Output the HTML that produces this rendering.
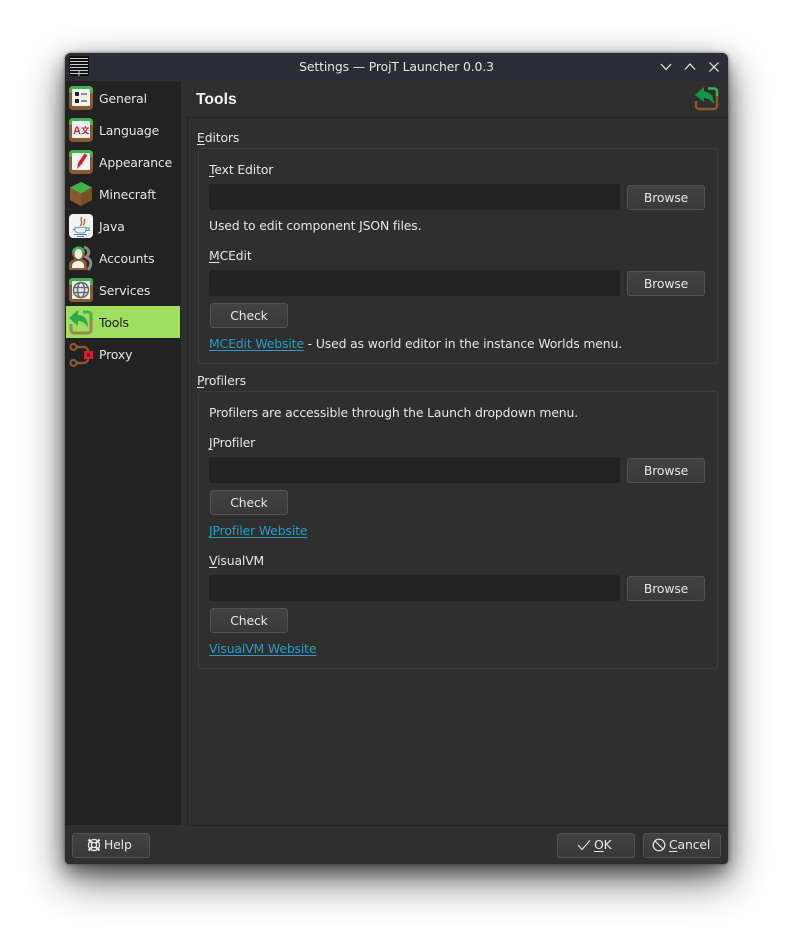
<!DOCTYPE html>
<html><head><meta charset="utf-8"><style>
html,body{margin:0;padding:0;width:793px;height:941px;background:#fff;overflow:hidden}
body{font-family:"DejaVu Sans","Liberation Sans",sans-serif;font-size:12.4px;color:#e6e6e6;position:relative;letter-spacing:-.13px}
#w{position:absolute;left:65px;top:53px;width:663px;height:811px;background:#2f2f2f;border-radius:6px 6px 4px 4px;box-shadow:0 16px 42px rgba(0,0,0,.58),0 8px 18px rgba(0,0,0,.42),0 0 3px rgba(0,0,0,.5);overflow:hidden}
#w>.a{margin-top:1px}
.a{position:absolute;white-space:nowrap;line-height:18px}
.b{position:absolute;box-sizing:border-box;width:78px;height:25px;background:linear-gradient(#424242,#393939);border:1px solid #525252;border-radius:3px;text-align:center;line-height:23px;color:#e6e6e6}
.i{position:absolute;box-sizing:border-box;left:144px;width:411px;height:26px;background:#232323;border-radius:3px}
.g{position:absolute;box-sizing:border-box;left:133px;width:520px;border:1px solid #3b3b3b;border-radius:3px}
u{text-underline-offset:2px}
.l{color:#2a9cc4;text-decoration:underline;text-underline-offset:2px}
svg{position:absolute;overflow:visible}
</style></head><body>
<div id="w">
<div style="position:absolute;left:0;top:0;width:663px;height:28px;background:#2a2e32"></div>
<svg style="left:4px;top:3px" width="21" height="21" viewBox="0 0 21 21"><rect width="20" height="20" fill="#111"/><path d="M1 2.500H19M1 5.500H19M1 8.500H19M1 11.500H19M1 14.500H19M1 17.500H19M10 14V20" stroke="#ccc" stroke-width="1"/></svg>
<div class="a" style="left:0;width:663px;text-align:center;top:4px;letter-spacing:-.13px">Settings — ProjT Launcher 0.0.3</div>
<svg style="left:595px;top:9px" width="60" height="12" fill="none" stroke="#eee" stroke-width="1.200"><path d="M1 2L6 7.500L11 2"/><path d="M25 7.500L30 2L35 7.500"/><path d="M49.500 .5L58.500 9.500M58.500 .5L49.500 9.500"/></svg>

<!-- sidebar -->
<div style="position:absolute;left:0;top:28px;width:116px;height:744px;background:#222"></div>
<div style="position:absolute;left:1px;top:253px;width:114px;height:32px;background:#9fdf60"></div>

<svg style="left:4px;top:33px" width="24" height="24"><rect width="24" height="24" rx="4" fill="#8a5a2b"/><path d="M0 4a4 4 0 0 1 4-4h16a4 4 0 0 1 4 4v3H0z" fill="#3cb44b"/><rect x="3" y="3" width="18" height="17" rx="1" fill="#f4f4f4"/><rect x="6" y="6" width="4" height="4" fill="#222"/><rect x="6" y="13" width="4" height="4" fill="#222"/><path d="M12 8h6M12 15h6" stroke="#666" stroke-width="1.500"/></svg>
<div class="a" style="left:34px;top:36px">General</div>

<svg style="left:4px;top:65px" width="24" height="24"><rect width="24" height="24" rx="4" fill="#8a5a2b"/><path d="M0 4a4 4 0 0 1 4-4h16a4 4 0 0 1 4 4v3H0z" fill="#3cb44b"/><rect x="3" y="3" width="18" height="17" rx="1" fill="#f4f4f4"/><text x="4" y="16" font-size="11" font-weight="bold" fill="#c8242c" font-family="Liberation Sans" letter-spacing="0">A</text><text x="12" y="15.500" font-size="8.500" font-weight="bold" fill="#c8242c" font-family="Noto Sans CJK SC" letter-spacing="0">文</text></svg>
<div class="a" style="left:34px;top:68px">Language</div>

<svg style="left:4px;top:97px" width="24" height="24"><rect width="24" height="24" rx="4" fill="#8a5a2b"/><path d="M0 4a4 4 0 0 1 4-4h16a4 4 0 0 1 4 4v3H0z" fill="#3cb44b"/><rect x="3" y="3" width="18" height="17" rx="1" fill="#f4f4f4"/><path d="M15.500 3.500L18.500 5L12.500 14.500L8 19L9 13z" fill="#c8242c"/></svg>
<div class="a" style="left:34px;top:100px">Appearance</div>

<svg style="left:5px;top:129px" width="22" height="24"><path d="M11 0L22 5.500V18L11 24L0 18V5.500z" fill="#8a5a2b"/><path d="M11 0L22 5.500L11 11.500L0 5.500z" fill="#3cb44b"/><path d="M11 11.500V24L22 18V5.500z" fill="#7a4e25"/></svg>
<div class="a" style="left:34px;top:132px">Minecraft</div>

<svg style="left:4px;top:161px" width="24" height="24"><rect width="24" height="24" rx="4" fill="#f4f4f4"/><path d="M13 3C10 6 15 8 11 12M16 5C14 7 17 9 14 11" fill="none" stroke="#d9602a" stroke-width="1.400"/><path d="M6 13.500h11v2.500a3.500 3.500 0 0 1-3.500 3h-4A3.500 3.500 0 0 1 6 16z" fill="none" stroke="#7ba6c9" stroke-width="1.300"/><path d="M17 14h3v2.500h-3M4 15.500h2M5 20.500h13M8 22.500h7" fill="none" stroke="#4a86b8" stroke-width="1.100"/></svg>
<div class="a" style="left:34px;top:164px">Java</div>

<svg style="left:4px;top:193px" width="24" height="24"><path d="M15 1C21 3 21 8 17 11C23 14 23 19 19 24" fill="none" stroke="#8a8a8a" stroke-width="3"/><path d="M0 24V19C0 15 3 14 6 13A6 7 0 0 1 3 7A6.500 6.500 0 0 1 16 7A6 7 0 0 1 13 13C16 14 18 15 18 19V24z" fill="#8a5a2b"/><path d="M3 7A6.500 6.500 0 0 1 16 7L14 6H5z" fill="#3cb44b"/><ellipse cx="9.500" cy="8" rx="4" ry="5" fill="#f4f4f4"/><path d="M3 22V20C3 17 6 15 9.500 15S15 17 15 20V22z" fill="#f4f4f4"/></svg>
<div class="a" style="left:34px;top:196px">Accounts</div>

<svg style="left:4px;top:225px" width="24" height="24"><rect width="24" height="24" rx="3" fill="#8a5a2b"/><path d="M0 3a3 3 0 0 1 3-3h18a3 3 0 0 1 3 3v4H0z" fill="#3cb44b"/><rect x="3" y="3" width="18" height="18" fill="#ececec"/><g fill="none" stroke="#6a6a6a" stroke-width="1.500"><circle cx="12" cy="12" r="7.500"/><ellipse cx="12" cy="12" rx="3.500" ry="7.500"/><path d="M5 9.500H19M5 14.500H19"/></g></svg>
<div class="a" style="left:34px;top:228px">Services</div>

<svg style="left:4px;top:257px" width="24" height="24" fill="none"><path d="M2 14v6a3 3 0 0 0 3 3h14a3 3 0 0 0 3-3V10" stroke="#a0864a" stroke-width="3"/><path d="M14 2h5a3 3 0 0 1 3 3v5" stroke="#3fb454" stroke-width="3"/><path d="M0 8L9 0V5C15 5 19 9 19 17C16 13 13 11 9 11V16z" fill="#2ea84a"/></svg>
<div class="a" style="left:34px;top:260px;color:#1c1c1c">Tools</div>

<svg style="left:4px;top:289px" width="26" height="26" fill="none"><path d="M6 5H15A4 4 0 0 1 19 9V17A4 4 0 0 1 15 21H6" stroke="#8a5a2b" stroke-width="2.400"/><circle cx="4.500" cy="5" r="3" stroke="#8a5a2b" stroke-width="2.200" fill="#222"/><circle cx="4.500" cy="21" r="3" stroke="#8a5a2b" stroke-width="2.200" fill="#222"/><rect x="15" y="9" width="9" height="8" fill="#d3222f"/><rect x="18" y="11.500" width="3" height="3" fill="#6a1018"/></svg>
<div class="a" style="left:34px;top:292px">Proxy</div>

<!-- header -->
<div class="a" style="left:131px;top:37px;font-size:15.700px;font-weight:bold;font-family:'Liberation Sans',sans-serif;color:#f2f2f2;letter-spacing:0">Tools</div>
<svg style="left:630px;top:34px" width="24" height="24" fill="none"><path d="M1 14v5a3 3 0 0 0 3 3h15a3 3 0 0 0 3-3V9" stroke="#8a5a2b" stroke-width="2.400"/><path d="M13 1.500h6a3 3 0 0 1 3 3V9" stroke="#3fb454" stroke-width="2.400"/><path d="M0 8L9 0V4.500C15 5 19 9 19 17C16 13 13 11 9 11V15z" fill="#0e9a45"/></svg>

<!-- content frame -->
<div style="position:absolute;box-sizing:border-box;left:122px;top:64px;width:545px;height:709px;border:1px solid #242424"></div>

<div class="a" style="left:132px;top:75px"><u>E</u>ditors</div>
<div class="g" style="top:95px;height:216px"></div>
<div class="a" style="left:144px;top:107px"><u>T</u>ext Editor</div>
<div class="i" style="top:131px"></div>
<div class="b" style="left:562px;top:132px">Browse</div>
<div class="a" style="left:144px;top:163px">Used to edit component JSON files.</div>
<div class="a" style="left:144px;top:193px"><u>M</u>CEdit</div>
<div class="i" style="top:217px"></div>
<div class="b" style="left:562px;top:218px">Browse</div>
<div class="b" style="left:145px;top:250px">Check</div>
<div class="a" style="left:144px;top:281px"><span class="l">MCEdit Website</span> - Used as world editor in the instance Worlds menu.</div>

<div class="a" style="left:132px;top:318px"><u>P</u>rofilers</div>
<div class="g" style="top:338px;height:278px"></div>
<div class="a" style="left:144px;top:350px">Profilers are accessible through the Launch dropdown menu.</div>
<div class="a" style="left:144px;top:380px"><u>J</u>Profiler</div>
<div class="i" style="top:404px"></div>
<div class="b" style="left:562px;top:405px">Browse</div>
<div class="b" style="left:145px;top:437px">Check</div>
<div class="a l" style="left:144px;top:468px">JProfiler Website</div>
<div class="a" style="left:144px;top:498px"><u>V</u>isualVM</div>
<div class="i" style="top:522px"></div>
<div class="b" style="left:562px;top:523px">Browse</div>
<div class="b" style="left:145px;top:555px">Check</div>
<div class="a l" style="left:144px;top:586px">VisualVM Website</div>

<!-- footer -->
<div class="b" style="left:7px;top:780px"></div>
<svg style="left:22px;top:785px" width="14" height="14" fill="none" stroke="#e6e6e6" stroke-width="1.300"><circle cx="7" cy="7" r="5.500"/><circle cx="7" cy="7" r="2.500"/><path d="M1.500 1.500L5 5M12.500 1.500L9 5M1.500 12.500L5 9M12.500 12.500L9 9" stroke-width="2.200"/></svg>
<div class="a" style="left:39px;top:782px">Help</div>
<div class="b" style="left:492px;top:780px"></div>
<svg style="left:512px;top:786px" width="14" height="12" fill="none" stroke="#e6e6e6" stroke-width="1.100"><path d="M1 6L5 10.500L13 1.500"/></svg>
<div class="a" style="left:529px;top:782px"><u>O</u>K</div>
<div class="b" style="left:578px;top:780px"></div>
<svg style="left:587px;top:785px" width="14" height="14" fill="none" stroke="#e6e6e6" stroke-width="1.200"><circle cx="7" cy="7" r="5.800"/><path d="M3 3L11 11"/></svg>
<div class="a" style="left:604px;top:782px"><u>C</u>ancel</div>
</div>
</body></html>
